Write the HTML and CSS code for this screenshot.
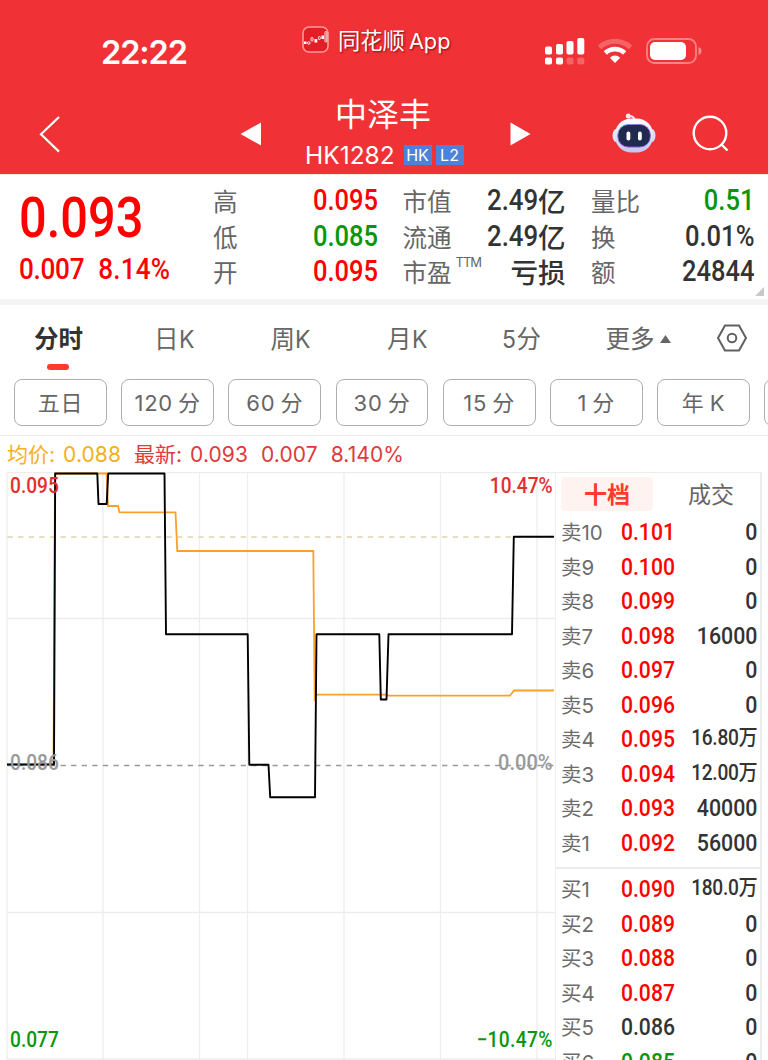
FILE: index.html
```html
<!DOCTYPE html>
<html lang="zh-CN">
<head>
<meta charset="utf-8">
<title>中泽丰 HK1282</title>
<link rel="stylesheet" href="styles.css">
</head>
<body>
<div class="screen">
  <header class="header">
    <div class="status">
      <div class="clock">22:22</div>
      <div class="brand">
        <svg width="27" height="27" viewBox="0 0 27 27">
          <rect x="1" y="1" width="25" height="25" rx="6" fill="#e21f26" stroke="#ff9a9c" stroke-width="1.600"/>
          <path d="M2 15.500h2.500v2.500h-2.500zM12.500 13h2.800v3.500h-2.800zM19.500 9.500h2.500v3.500h-2.500z" fill="#fff"/>
          <g fill="none" stroke="#fff" stroke-width=".9"><circle cx="6.800" cy="17" r="1.300"/><rect x="9" y="11.500" width="2" height="3.500" rx=".8"/><rect x="16.500" y="10.500" width="1.800" height="3" rx=".8"/><rect x="23" y="5.500" width="1.800" height="10.500" rx=".8"/></g>
        </svg>
        <span class="brand-name">同花顺<span class="brand-app">App</span></span>
      </div>
      <div class="indicators">
        <svg width="40" height="28" viewBox="0 0 40 28" fill="#fff">
          <rect x="0" y="8.500" width="7" height="8" rx="1.800"/><rect x="11" y="6" width="7" height="10.500" rx="1.800"/><rect x="21.500" y="3" width="7" height="13.500" rx="1.800"/><rect x="32.300" y="0" width="7" height="16.500" rx="1.800"/>
          <rect x="0" y="19.500" width="7" height="7" rx="1.800"/><rect x="11" y="19.500" width="7" height="7" rx="1.800"/><rect x="21.500" y="19.500" width="7" height="7" rx="1.800" opacity=".25"/><rect x="32.300" y="19.500" width="7" height="7" rx="1.800" opacity=".25"/>
        </svg>
        <svg class="wifi" width="34" height="26" viewBox="0 0 34 26">
          <path d="M1.500 9.500A22.500 22.500 0 0 1 32.500 9.500" fill="none" stroke="#fff" stroke-opacity=".25" stroke-width="5"/>
          <path d="M7.300 15A14 14 0 0 1 26.700 15" fill="none" stroke="#fff" stroke-width="4.600"/>
          <path d="M11.800 19.700Q17 15.300 22.200 19.700L17 25Z" fill="#fff"/>
        </svg>
        <svg class="battery" width="56" height="26" viewBox="0 0 56 26">
          <rect x="1" y="1" width="49" height="24" rx="7.500" fill="none" stroke="#fff" stroke-opacity=".4" stroke-width="1.800"/>
          <rect x="4" y="4" width="36" height="18" rx="5" fill="#fff"/>
          <path d="M52.500 9q3 1.200 3 4t-3 4z" fill="#fff" fill-opacity=".45"/>
        </svg>
      </div>
    </div>
    <div class="titlebar">
      <svg class="back" width="22" height="38" viewBox="0 0 22 38"><path d="M20 2L2 19.300L20 36.600" fill="none" stroke="#fff" stroke-width="2.200"/></svg>
      <svg class="prev" width="21" height="24" viewBox="0 0 21 24"><path d="M21 .5V23.500L.500 12z" fill="#fff"/></svg>
      <div class="title">
        <div class="name">中泽丰</div>
        <div class="code"><span class="ticker">HK1282</span><span class="tag">HK</span><span class="tag">L2</span></div>
      </div>
      <svg class="next" width="21" height="24" viewBox="0 0 21 24"><path d="M.500 .5V23.500L20.500 12z" fill="#fff"/></svg>
      <svg class="robot" width="44" height="42" viewBox="0 0 44 42">
        <defs>
          <linearGradient id="shell" x1="0" y1="0" x2="0" y2="1"><stop offset="0" stop-color="#fff"/><stop offset="1" stop-color="#c5c4ec"/></linearGradient>
          <linearGradient id="rim" x1="0" y1="0" x2="1" y2="1"><stop offset="0" stop-color="#6db8d8"/><stop offset=".5" stop-color="#9a4bdd"/><stop offset="1" stop-color="#6c5de0"/></linearGradient>
        </defs>
        <path d="M16 3Q22 2.500 22.500 7" fill="none" stroke="#f3dfe8" stroke-width="2"/><circle cx="16.300" cy="3" r="2.500" fill="#f7e5ee"/>
        <ellipse cx="4" cy="22.500" rx="3.500" ry="6.500" fill="#e8e4f7"/><ellipse cx="40" cy="22.500" rx="3.500" ry="6.500" fill="#dcd9f5"/>
        <rect x="2.800" y="5.500" width="38.400" height="34" rx="16.500" fill="url(#shell)"/>
        <rect x="5.800" y="11.500" width="32.500" height="22.500" rx="10.500" fill="#1f2a4e" stroke="url(#rim)" stroke-width="1"/>
        <rect x="14.500" y="18.500" width="3.800" height="9" rx="1.900" fill="#fff"/><rect x="26" y="18.500" width="3.800" height="9" rx="1.900" fill="#fff"/>
      </svg>
      <svg class="search" width="38" height="38" viewBox="0 0 38 38" fill="none" stroke="#fff" stroke-width="2.400"><circle cx="18" cy="18" r="16.300"/><path d="M29 29L35.500 35.500"/></svg>
    </div>
  </header>

  <section class="quote">
    <div class="last">
      <div class="price din up">0.093</div>
      <div class="change up"><span class="din">0.007</span><span class="din">8.14%</span></div>
    </div>
    <dl class="stats stats-a">
      <dt>高</dt><dd class="up din">0.095</dd>
      <dt>低</dt><dd class="down din">0.085</dd>
      <dt>开</dt><dd class="up din">0.095</dd>
    </dl>
    <dl class="stats stats-b">
      <dt>市值</dt><dd class="mix"><span class="din">2.49</span>亿</dd>
      <dt>流通</dt><dd class="mix"><span class="din">2.49</span>亿</dd>
      <dt>市盈<sup>TTM</sup></dt><dd class="mix">亏损</dd>
    </dl>
    <dl class="stats stats-c">
      <dt>量比</dt><dd class="down din">0.51</dd>
      <dt>换</dt><dd class="din">0.01%</dd>
      <dt>额</dt><dd class="din">24844</dd>
    </dl>
    <svg class="expand" width="9" height="9" viewBox="0 0 9 9"><path d="M9 0V9H0z" fill="#c8c8c8"/></svg>
  </section>

  <nav class="tabs">
    <span class="tab active">分时</span>
    <span class="tab">日<i>K</i></span>
    <span class="tab">周<i>K</i></span>
    <span class="tab">月<i>K</i></span>
    <span class="tab"><i>5</i>分</span>
    <span class="tab more">更多<svg width="11" height="8" viewBox="0 0 11 8"><path d="M5.500 0L11 8H0z" fill="#666"/></svg></span>
    <svg class="gear" width="32" height="28" viewBox="0 0 32 28" fill="none" stroke="#606060" stroke-width="2"><path d="M9 1.500H23L30 14L23 26.500H9L2 14z"/><circle cx="16" cy="14" r="4.300"/></svg>
  </nav>
  <div class="chips">
    <span class="chip">五日</span>
    <span class="chip"><i>120</i>分</span>
    <span class="chip"><i>60</i>分</span>
    <span class="chip"><i>30</i>分</span>
    <span class="chip"><i>15</i>分</span>
    <span class="chip"><i>1</i>分</span>
    <span class="chip">年<i class="after">K</i></span>
    <span class="chip"></span>
  </div>

  <div class="legend">
    <span class="avg">均价:<i>0.088</i></span>
    <span class="new">最新:<i>0.093</i><i>0.007</i><i>8.140%</i></span>
  </div>

  <main class="market">
    <div class="chart">
      <svg width="556" height="588" viewBox="0 472 556 588" fill="none">
        <g stroke="#ededed" stroke-width="1.300">
          <path d="M7 472.500H556M7 618.500H556M7 912.500H556M7 1059H556"/>
          <path d="M7 472V1060M103 472V1060M199.500 472V1060M247.500 472V1060M344 472V1060M440.500 472V1060M537 472V1060M555.800 472V1060"/>
        </g>
        <path d="M7.500 765.500H554" stroke="#999" stroke-width="1.300" stroke-dasharray="5.300 5.300"/>
        <path d="M7.500 537H554" stroke="#ddd3b0" stroke-width="1.600" stroke-dasharray="5.300 5.300"/>
        <path d="M7 764.500H53.500L55 473.500H106.500L108 506H118L119.500 512.300H175.500L177.300 551H313.300L314.700 701L316 694.700H387L388 695.700H510L514 690.500H554" stroke="#f9a12b" stroke-width="1.800"/>
        <path d="M7 764.500H54L55.200 473.500H97.300L98.500 504H106.700L108.200 473.500H164.500L166 634.300H247.700L249.300 764.700H268.500L270.200 797.300H315L316.500 634.300H379.300L380.800 699.500H386.500L388.500 634.300H512L513.800 536.700H554" stroke="#000" stroke-width="1.900" stroke-linejoin="round"/>
      </svg>
      <span class="axis tl up2">0.095</span>
      <span class="axis tr up2">10.47%</span>
      <span class="axis ml">0.086</span>
      <span class="axis mr">0.00%</span>
      <span class="axis bl down">0.077</span>
      <span class="axis br down">−10.47%</span>
    </div>
    <aside class="book">
      <div class="book-tabs"><span class="book-tab on">十档</span><span class="book-tab">成交</span></div>
      <div class="rows">
        <div class="row"><span>卖<i>10</i></span><b class="up">0.101</b><em>0</em></div>
        <div class="row"><span>卖<i>9</i></span><b class="up">0.100</b><em>0</em></div>
        <div class="row"><span>卖<i>8</i></span><b class="up">0.099</b><em>0</em></div>
        <div class="row"><span>卖<i>7</i></span><b class="up">0.098</b><em>16000</em></div>
        <div class="row"><span>卖<i>6</i></span><b class="up">0.097</b><em>0</em></div>
        <div class="row"><span>卖<i>5</i></span><b class="up">0.096</b><em>0</em></div>
        <div class="row"><span>卖<i>4</i></span><b class="up">0.095</b><em class="wan">16.80万</em></div>
        <div class="row"><span>卖<i>3</i></span><b class="up">0.094</b><em class="wan">12.00万</em></div>
        <div class="row"><span>卖<i>2</i></span><b class="up">0.093</b><em>40000</em></div>
        <div class="row"><span>卖<i>1</i></span><b class="up">0.092</b><em>56000</em></div>
      </div>
      <div class="rows bids">
        <div class="row"><span>买<i>1</i></span><b class="up">0.090</b><em class="wan">180.0万</em></div>
        <div class="row"><span>买<i>2</i></span><b class="up">0.089</b><em>0</em></div>
        <div class="row"><span>买<i>3</i></span><b class="up">0.088</b><em>0</em></div>
        <div class="row"><span>买<i>4</i></span><b class="up">0.087</b><em>0</em></div>
        <div class="row"><span>买<i>5</i></span><b>0.086</b><em>0</em></div>
        <div class="row"><span>买<i>6</i></span><b class="down">0.085</b><em>0</em></div>
      </div>
    </aside>
  </main>
</div>
</body>
</html>
```
FILE: styles.css
```css
* { box-sizing: border-box; }
body { margin: 0; background: #fff; }
i, em { font-style: normal; }
svg { display: block; flex: none; }
dl, dd { margin: 0; }

.screen {
  width: 768px;
  height: 1060px;
  overflow: hidden;
  display: flex;
  flex-direction: column;
  font-family: Inter, "Noto Sans CJK SC", sans-serif;
  color: #333;
  white-space: nowrap;
}
.up { color: #f00; }
.down { color: #0a960a; }
.up2 { color: #e3302f; }
.din {
  font-family: Roboto, "Noto Sans CJK SC", sans-serif;
  font-weight: 500;
}

/* header */
.header { height: 174px; flex: none; background: #f03135; color: #fff; }
.status { height: 90px; display: flex; align-items: flex-start; }
.clock { width: 302px; padding: 33px 0 0 101px; font-size: 32.500px; line-height: 40px; font-weight: 600; letter-spacing: -1.100px; }
.brand { width: 243px; padding-top: 25px; display: flex; align-items: center; gap: 9px; }
.brand-name { font: 22.300px/28px "Noto Sans CJK SC", sans-serif; text-shadow: 1px 1px 2px rgba(80, 0, 0, .7); }
.brand-app { font: 21.700px Inter, sans-serif; margin-left: 4px; }
.indicators { display: flex; padding-top: 38px; }
.wifi { margin-left: 13px; }
.battery { margin-left: 13.500px; }
.titlebar { display: flex; align-items: flex-start; height: 84px; }
.back { margin: 25px 0 0 39px; }
.prev { margin: 31.500px 0 0 179px; }
.title { width: 160px; margin-left: 43px; }
.name { font: 32px/40px "Noto Sans CJK SC", sans-serif; padding: 2px 0 0 31px; }
.code { display: flex; align-items: center; gap: 4px; margin-top: 7.500px; margin-left: 1px; }
.ticker { font-size: 24.500px; line-height: 30px; width: 94.500px; }
.tag { width: 28px; height: 20px; background: #4d82db; font-size: 16px; line-height: 20px; text-align: center; }
.next { margin: 31.500px 0 0 46px; }
.robot { margin: 23px 0 0 81px; }
.search { margin: 25px 0 0 36px; }

/* quote summary */
.quote { position: relative; height: 131px; flex: none; display: flex; border-bottom: 6px solid #f4f4f4; border-top: 1px solid #fdeceb; }
.last { width: 213px; padding: 11px 0 0 19px; }
.price { font-size: 55px; line-height: 64px; transform: scaleX(.886); transform-origin: 0 0; }
.change { display: flex; font-size: 29px; line-height: 36px; margin-top: 1px; transform: scaleX(.9); transform-origin: 0 0; gap: 15.500px; letter-spacing: -.3px; }
.change .din + .din { letter-spacing: .2px; }
.stats { display: grid; grid-template-columns: auto auto; justify-content: space-between; grid-auto-rows: 35.500px; margin-top: 7px; line-height: 37px; font-size: 29px; height: 108px; }
.stats dt { font: 24.500px/38px "Noto Sans CJK SC", sans-serif; color: #666; position: relative; }
.stats dd { text-align: right; }
.stats dd.din { transform: scaleX(.88); transform-origin: 100% 0; }
.stats-a { width: 164.500px; }
.stats-b { width: 163px; margin-left: 25px; }
.stats-c { width: 163px; margin-left: 25.500px; }
.mix { font: 500 27.500px/36px "Noto Sans CJK SC", sans-serif; display: flex; justify-content: flex-end; }
.mix .din { font-size: 29px; line-height: 37px; width: 51px; transform: scaleX(.89); transform-origin: 0 0; }
.stats sup { position: absolute; left: 53px; top: 2px; font: 13px/14px Inter, sans-serif; letter-spacing: -1px; vertical-align: baseline; }
.expand { position: absolute; right: 4px; bottom: 3px; }

/* period tabs */
.tabs { height: 74px; flex: none; display: flex; padding: 17px 0 0 34px; font-size: 24.500px; line-height: 34px; color: #666; }
.tab { width: 116.500px; }
.tab i { display: inline-block; transform: scaleX(.94); transform-origin: 0 0; }
.tab.active { width: 120px; color: #333; font-weight: 700; }
.tab.active::after { content: ""; display: block; width: 22px; height: 6px; border-radius: 3px; background: #ff3b30; margin: 8px 0 0 13px; }
.tab:nth-child(4) { width: 114.500px; }
.tab:nth-child(5) { width: 104px; }
.more { display: flex; align-items: center; height: 34px; gap: 5px; width: 110px; }
.gear { margin-top: 2px; }
.chips { display: flex; gap: 14.300px; padding-left: 14px; height: 56px; flex: none; }
.chip { width: 92.900px; height: 47px; flex: none; border: 1.500px solid #aeaeae; border-radius: 8px; display: flex; justify-content: center; gap: 5px; align-items: center; font-size: 22px; line-height: 40px; color: #666; letter-spacing: .8px; }

/* legend */
.legend { height: 37px; flex: none; border-top: 1px solid #ebebeb; display: flex; padding-left: 7px; font-size: 21px; line-height: 37px; }
.legend i { margin-left: 8px; letter-spacing: .1px; }
.legend i + i { margin-left: 13px; }
.avg { color: #f5b021; width: 127px; }
.new { color: #e03a3b; }

/* chart and order book */
.market { display: flex; flex: none; height: 588px; }
.chart { position: relative; width: 556px; flex: none; }
.axis { position: absolute; font: 500 21.500px/24px Roboto, sans-serif; transform: scaleX(.89); }
.tl, .ml, .bl { left: 10px; transform-origin: 0 0; }
.tr, .mr, .br { right: 3.500px; transform-origin: 100% 0; }
.mr { transform: scaleX(.93); }
.br { letter-spacing: .4px; }
.tl, .tr { top: 2px; }
.ml, .mr { top: 279px; color: #999; }
.bl, .br { top: 556px; }
.book { width: 206px; flex: none; border: 1px solid #ececec; border-width: 1px 2px 0 0; overflow: hidden; }
.book-tabs { display: flex; padding: 4px 0 0 5px; height: 42px; }
.book-tab { width: 92px; height: 34px; flex: none; font: 23px/32px "Noto Sans CJK SC", sans-serif; text-align: center; color: #666; margin-right: 12px; }
.on { background: #fff3f2; border-radius: 4px; color: #ff3b30; font-weight: 700; }
.rows { height: 352px; }
.bids { border-top: 2px solid #ececec; padding-top: 3px; }
.row { display: flex; height: 34.550px; line-height: 35px; padding: 0 3px 0 5px; color: #333; font-family: Roboto, "Noto Sans CJK SC", sans-serif; }
.row span { width: 59.500px; flex: none; font: 20.500px/35px Inter, "Noto Sans CJK SC", sans-serif; color: #6c6c6c; }
.row b { width: 60px; flex: none; font-size: 24px; font-weight: 500; transform: scaleX(.88); transform-origin: 0 0; }
.row em { flex: 1; display: flex; justify-content: flex-end; font-size: 24px; font-weight: 500; transform: scaleX(.89); transform-origin: 100% 0; }
.row .wan { font-size: 21.500px; line-height: 31px; letter-spacing: -.3px; }
```
